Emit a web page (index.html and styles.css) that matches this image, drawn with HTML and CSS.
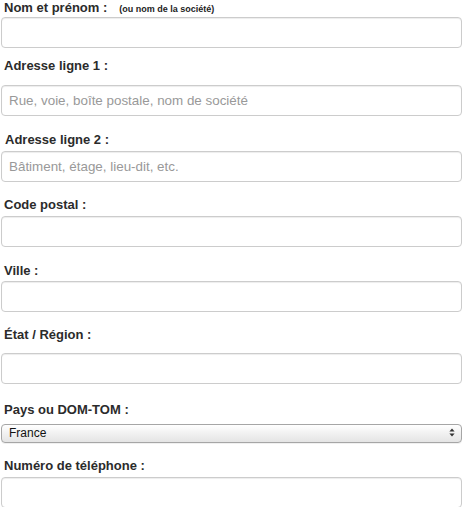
FILE: index.html
```html
<!DOCTYPE html>
<html lang="fr">
<head>
<meta charset="utf-8">
<title>Adresse</title>
<link rel="stylesheet" href="styles.css">
</head>
<body>
<form class="form">
  <div class="field field--first">
    <label class="label">Nom et prénom :<span class="hint">(ou nom de la société)</span></label>
    <input class="input" type="text">
  </div>
  <div class="field field--addr1">
    <label class="label">Adresse ligne 1 :</label>
    <input class="input" type="text" placeholder="Rue, voie, boîte postale, nom de société">
  </div>
  <div class="field field--wide">
    <label class="label label--indent">Adresse ligne 2 :</label>
    <input class="input" type="text" placeholder="Bâtiment, étage, lieu-dit, etc.">
  </div>
  <div class="field">
    <label class="label">Code postal :</label>
    <input class="input" type="text">
  </div>
  <div class="field field--wide field--tight">
    <label class="label">Ville :</label>
    <input class="input" type="text">
  </div>
  <div class="field field--region">
    <label class="label">État / Région :</label>
    <input class="input" type="text">
  </div>
  <div class="field field--country">
    <label class="label">Pays ou DOM-TOM :</label>
    <div class="select-wrap">
      <select class="select">
        <option>France</option>
      </select>
      <svg class="select-arrows" width="6" height="9" viewBox="0 0 6 9" aria-hidden="true">
        <path d="M3 0.5 L5.6 3.5 L0.4 3.5 Z" fill="#333"/>
        <path d="M3 8.5 L5.6 5.5 L0.4 5.5 Z" fill="#333"/>
      </svg>
    </div>
  </div>
  <div class="field">
    <label class="label">Numéro de téléphone :</label>
    <input class="input" type="text">
  </div>
</form>
</body>
</html>
```

FILE: styles.css
```css
html, body {
  margin: 0;
  padding: 0;
  background: #fff;
}

body {
  font-family: "Liberation Sans", Arial, sans-serif;
  color: #333;
  overflow: hidden;
}

.form {
  padding: 0 1px;
  display: flex;
  flex-direction: column;
}

.field {
  display: flex;
  flex-direction: column;
  margin-top: 15px;
}

.field--first { margin-top: 0; }
.field--wide { margin-top: 16px; }
.field--country { margin-top: 18px; }

.label {
  display: block;
  font-size: 13px;
  font-weight: bold;
  line-height: 15px;
  height: 15px;
  padding-left: 3px;
  margin-bottom: 4px;
  color: #2b2b2b;
  white-space: nowrap;
}

.label--indent { padding-left: 4px; }

.field--first .label { margin-bottom: 2px; }
.field--addr1 { margin-top: 10px; }
.field--addr1 .label { margin-bottom: 12px; }
.field--tight .label { margin-bottom: 3px; }
.field--region .label { margin-bottom: 11px; }
.field--country .label { margin-bottom: 6px; }

.hint {
  font-size: 9px;
  margin-left: 12px;
  color: #222;
}

.input {
  box-sizing: border-box;
  width: 100%;
  height: 31px;
  margin: 0;
  padding: 0 7px;
  border: 1px solid #ccc;
  border-radius: 4px;
  box-shadow: inset 0 1px 1px rgba(0, 0, 0, 0.075);
  font-family: "Liberation Sans", Arial, sans-serif;
  font-size: 13.4px;
  color: #555;
  background: #fff;
  outline: none;
}

.input::placeholder {
  color: #999;
}

.select-wrap {
  position: relative;
}

.select {
  box-sizing: border-box;
  width: 100%;
  height: 19px;
  margin: 0;
  padding: 0 0 0 7px;
  border: 1px solid #a6a6a6;
  border-radius: 4px;
  -webkit-appearance: none;
  appearance: none;
  background: linear-gradient(#ffffff, #f1f1f1 50%, #e4e4e4);
  box-shadow: 0 1px 0 rgba(0, 0, 0, 0.06);
  font-family: "Liberation Sans", Arial, sans-serif;
  font-size: 12px;
  line-height: 17px;
  color: #111;
  outline: none;
}

.select-arrows {
  position: absolute;
  right: 7px;
  top: 5px;
  pointer-events: none;
}
```
